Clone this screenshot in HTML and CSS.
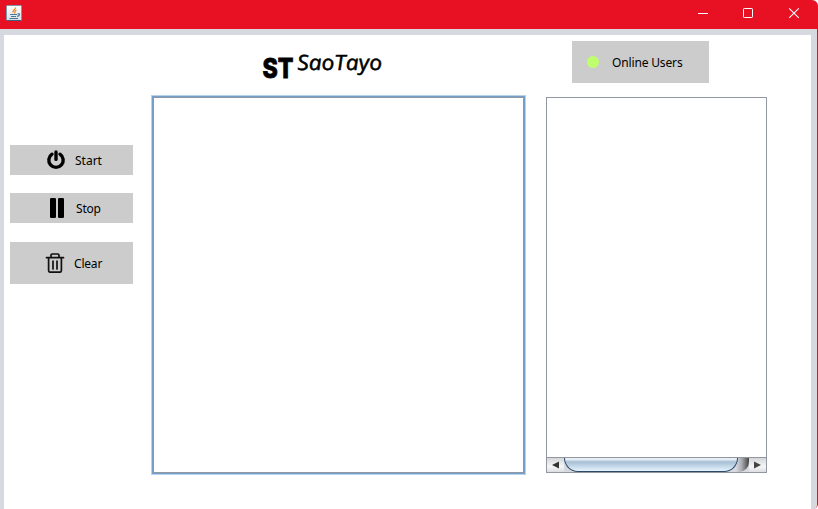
FILE: index.html
```
<!DOCTYPE html>
<html lang="en">
<head>
<meta charset="utf-8">
<title>SaoTayo</title>
<link rel="stylesheet" href="styles.css">
</head>
<body>
<div class="window">
  <header class="titlebar">
    <svg class="java" width="16" height="16" viewBox="0 0 16 16">
      <defs><linearGradient id="tile" x2="0" y2="1"><stop stop-color="#fff"/><stop offset="1" stop-color="#d4e0ea"/></linearGradient></defs>
      <rect x=".5" y=".5" width="15" height="15" rx="1" fill="url(#tile)" stroke="#8196a5"/>
      <path d="M1 15.500h14" stroke="#416078"/>
      <path d="M9.500 2.500C10 4.500 6 5 7 7.500M10.500 5C8 6 9.500 7 8.500 8.500" fill="none" stroke="#ee8822" stroke-width="1.300"/>
      <path d="M4 9.500h7M5 11.500h5M3.500 13.500h8.500M11.500 9c3-1 2.500 2-.5 2.500" fill="none" stroke="#4b7794" stroke-width="1.200"/>
    </svg>
    <div class="controls">
      <svg width="46" height="28" viewBox="0 0 46 28"><path d="M18 13.500h10" stroke="#fff"/></svg>
      <svg width="46" height="28" viewBox="0 0 46 28"><rect x="17.500" y="8.500" width="9" height="9" rx=".7" fill="none" stroke="#fff"/></svg>
      <svg width="46" height="28" viewBox="0 0 46 28"><path d="M17.200 8.300l9.600 9.600M26.800 8.300l-9.600 9.600" stroke="#fff" stroke-width="1.100"/></svg>
    </div>
  </header>
  <main class="content">
    <nav class="actions">
      <button class="button start">
        <svg width="20" height="20" viewBox="0 0 20 20"><path d="M6 4.200a7.200 7.200 0 1 0 8 0" fill="none" stroke="#000" stroke-width="3.400" stroke-linecap="round"/><path d="M10 2v7.400" stroke="#000" stroke-width="3.400" stroke-linecap="round"/></svg>
        <span>Start</span>
      </button>
      <button class="button stop">
        <svg width="20" height="20" viewBox="0 0 20 20"><rect x="3" y="0" width="6" height="20" rx="1.300"/><rect x="11" y="0" width="6" height="20" rx="1.300"/></svg>
        <span>Stop</span>
      </button>
      <button class="button clear">
        <svg width="20" height="20" viewBox="0 0 20 20" fill="none" stroke="#111" stroke-width="1.700"><path d="M1.500 4.700h17M6 4V2.300q0-1.300 1.300-1.300h5.400Q14 1 14 2.300V4M3.600 5v12.400q0 1.800 1.800 1.800h9.200q1.800 0 1.800-1.800V5M8 8v8M12 8v8" stroke-linecap="round"/></svg>
        <span>Clear</span>
      </button>
    </nav>
    <section class="console">
      <h1 class="brand">
        <svg width="122" height="30" viewBox="0 0 122 30">
          <text class="mark" x="-.5" y="26.500" textLength="31" lengthAdjust="spacingAndGlyphs">ST</text>
          <text class="name" transform="translate(2 0) skewX(5)" x="31" y="19" textLength="85" lengthAdjust="spacingAndGlyphs">SaoTayo</text>
        </svg>
      </h1>
      <div class="log"></div>
    </section>
    <aside class="users">
      <div class="online"><i class="dot"></i><span>Online Users</span></div>
      <div class="list">
        <div class="scrollbar">
          <svg class="arrow" width="17" height="14" viewBox="0 0 17 14"><path d="M5 7l7-3.500v7z" fill="#333"/></svg>
          <div class="track"><div class="thumb"></div></div>
          <svg class="arrow" width="17" height="14" viewBox="0 0 17 14"><path d="M12 7L5 3.500v7z" fill="#444"/></svg>
        </div>
      </div>
    </aside>
  </main>
</div>
</body>
</html>
```
FILE: styles.css
```
* { box-sizing: border-box; }
body { margin: 0; overflow: hidden; background: #fff; font: 12px "Noto Sans", sans-serif; }
.window { width: 818px; height: 509px; background: #e81123; border-radius: 0 6px 5px 0; }
.titlebar { height: 29px; display: flex; justify-content: space-between; align-items: flex-start; }
.java { margin: 5px 0 0 6px; }
.controls { display: flex; width: 138px; }
.controls svg { flex: none; }
.content {
  width: 817px; height: 480px; background: #fff;
  border: solid #d6d9df; border-width: 6px 6px 0 4px; border-bottom-right-radius: 4px;
  display: grid; grid-template-columns: 123px 375px 221px; column-gap: 18px; padding-left: 6px;
}
.actions { padding-top: 110px; display: flex; flex-direction: column; }
.button {
  border: 0; width: 123px; height: 30px; margin: 0 0 18px; padding: 0; background: #ccc;
  display: flex; align-items: center; color: #000; font: 12px "Noto Sans", sans-serif;
}
.start { padding-left: 36px; gap: 9px; }
.stop { padding-left: 37px; gap: 9px; margin-bottom: 19px; }
.stop span, .clear span { letter-spacing: -.2px; }
.clear { padding-left: 35px; gap: 9px; height: 42px; }
.console { padding-top: 16px; }
.brand { margin: 0 0 0 112px; height: 44px; }
.brand svg { display: block; overflow: visible; }
.mark { font: 800 27px Inter, sans-serif; stroke: #000; stroke-width: .8px; }
.name { font: italic 500 21px "Open Sans", sans-serif; stroke: #000; stroke-width: .5px; }
.log { width: 375px; height: 380px; border: 1px solid #b8d3ec; box-shadow: inset 0 0 0 1px #73a0ca, inset 0 0 0 2px #9297a1; }
.users { padding: 6px 0 0 2px; }
.online { width: 137px; height: 42px; margin-left: 26px; background: #ccc; display: flex; align-items: center; padding-left: 15px; gap: 13px; letter-spacing: -.15px; }
.dot { width: 12px; height: 12px; border-radius: 50%; background: #bfff6e; }
.list { width: 221px; height: 376px; margin-top: 14px; border: 1px solid #9297a1; display: flex; align-items: flex-end; }
.scrollbar { width: 219px; height: 15px; display: flex; border-top: 1px solid #92979f; background: #d6d9df; }
.arrow { flex: none; background: linear-gradient(#d5d6da, #f5f6f7 60%, #dcdee2); }
.track { flex: 1; background: linear-gradient(90deg, #d6d9df 93%, #aaacb2 96%, #444); border-radius: 0 0 10px 0; }
.thumb { width: 174px; height: 14px; border: 1px solid #2f4a66; border-top: 0; border-radius: 0 0 14px 14px; background: linear-gradient(#e9f1f8 0 10%, #a9bfd2 30%, #c5d9ea 65%, #e4f5ff); }
```
